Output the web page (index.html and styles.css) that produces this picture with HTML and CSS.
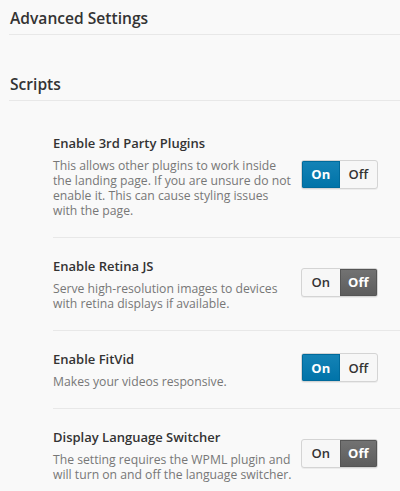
FILE: index.html
```html
<!DOCTYPE html>
<html>
<head>
<meta charset="utf-8">
<link rel="stylesheet" href="styles.css">
</head>
<body>
<div class="page">
  <h2 class="section-title">Advanced Settings</h2>
  <h2 class="section-title section-title--spaced">Scripts</h2>
  <div class="settings">
    <div class="setting">
      <div class="setting-text">
        <div class="setting-name">Enable 3rd Party Plugins</div>
        <div class="setting-desc">This allows other plugins to work inside the landing page. If you are unsure do not enable it. This can cause styling issues with the page.</div>
      </div>
      <div class="toggle">
        <span class="seg seg-on active-on">On</span>
        <span class="seg seg-off">Off</span>
      </div>
    </div>
    <div class="setting">
      <div class="setting-text">
        <div class="setting-name">Enable Retina JS</div>
        <div class="setting-desc">Serve high-resolution images to devices with retina displays if available.</div>
      </div>
      <div class="toggle">
        <span class="seg seg-on">On</span>
        <span class="seg seg-off active-off">Off</span>
      </div>
    </div>
    <div class="setting">
      <div class="setting-text">
        <div class="setting-name">Enable FitVid</div>
        <div class="setting-desc">Makes your videos responsive.</div>
      </div>
      <div class="toggle">
        <span class="seg seg-on active-on">On</span>
        <span class="seg seg-off">Off</span>
      </div>
    </div>
    <div class="setting">
      <div class="setting-text">
        <div class="setting-name">Display Language Switcher</div>
        <div class="setting-desc">The setting requires the WPML plugin and will turn on and off the language switcher.</div>
      </div>
      <div class="toggle">
        <span class="seg seg-on">On</span>
        <span class="seg seg-off active-off">Off</span>
      </div>
    </div>
  </div>
</div>
</body>
</html>
```
FILE: styles.css
```css
html, body {
  margin: 0;
  padding: 0;
  background: #f9f9f9;
}
body {
  font-family: "Open Sans", "Liberation Sans", sans-serif;
  color: #333;
}
.page {
  padding-left: 9px;
}
.section-title {
  margin: 0;
  padding: 7px 0 5px 1px;
  font-size: 15.6px;
  line-height: 22px;
  font-weight: 600;
  color: #333;
  border-bottom: 1px solid #e8e8e8;
}
.section-title--spaced {
  margin-top: 31px;
}
.settings {
  margin-left: 44px;
  padding-top: 14px;
}
.setting {
  display: flex;
  align-items: center;
  padding: 18px 22px 19px 0;
  border-bottom: 1px solid #e8e8e8;
}
.setting:last-child {
  border-bottom: none;
}
.setting-text {
  flex: 1;
  max-width: 242px;
}
.setting-name {
  font-size: 13px;
  font-weight: 600;
  line-height: 20px;
  color: #333;
}
.setting-desc {
  margin-top: 5px;
  font-size: 12.2px;
  line-height: 15px;
  color: #777;
}
.toggle {
  margin-left: auto;
  margin-bottom: 3px;
  display: flex;
  width: 77px;
  height: 29px;
  box-sizing: border-box;
  border-radius: 3px;
  overflow: hidden;
  border: 1px solid #d4d4d4;
  background: #f7f7f7;
  box-shadow: 0 1px 0 rgba(0,0,0,0.05);
}
.seg {
  flex: 1;
  display: flex;
  align-items: center;
  justify-content: center;
  font-size: 13px;
  font-weight: 600;
  color: #333;
}
.active-on {
  background: linear-gradient(#1583b6, #0073a8);
  color: #fff;
  font-weight: 700;
  box-shadow: inset 0 0 0 1px #006a9b;
}
.active-off {
  background: linear-gradient(#737373, #5c5c5c);
  color: #fff;
  font-weight: 700;
  box-shadow: inset 0 0 0 1px #555;
}
```
